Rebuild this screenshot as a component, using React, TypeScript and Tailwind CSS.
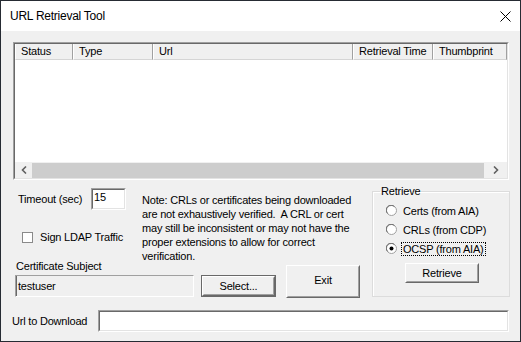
import React, { useState } from "react";

const font = { fontFamily: '"Liberation Sans", Arial, sans-serif' };

function Raised({ className = "", children }: { className?: string; children: React.ReactNode }) {
    return (
        <div className={`border border-t-white border-l-white border-b-[#696969] border-r-[#696969] bg-[#f0f0f0] ${className}`}>
            <div className="flex h-full w-full items-center justify-center border border-t-[#f0f0f0] border-l-[#f0f0f0] border-b-[#a0a0a0] border-r-[#a0a0a0]">
                {children}
            </div>
        </div>
    );
}

function Sunken({ className = "", inner = "bg-white", children }: { className?: string; inner?: string; children?: React.ReactNode }) {
    return (
        <div className={`border border-t-[#a0a0a0] border-l-[#a0a0a0] border-b-white border-r-white ${className}`}>
            <div className={`h-full w-full border border-t-[#696969] border-l-[#696969] border-b-[#e3e3e3] border-r-[#e3e3e3] ${inner}`}>
                {children}
            </div>
        </div>
    );
}

function Radio({ checked }: { checked?: boolean }) {
    return (
        <svg width="11" height="11" viewBox="0 0 11 11" className="shrink-0">
            <circle cx="5.5" cy="5.5" r="5" fill="#fff" stroke="#a0a0a0" />
            <path d="M1.6 8.4 A4.2 4.2 0 0 1 8.4 1.6" fill="none" stroke="#696969" strokeWidth="1" />
            {checked && <circle cx="5.5" cy="5.5" r="2" fill="#000" />}
        </svg>
    );
}

const columns = [
    { label: "Status", w: "w-[58px]" },
    { label: "Type", w: "w-[80px]" },
    { label: "Url", w: "w-[200px]" },
    { label: "Retrieval Time", w: "w-[80px]" },
    { label: "Thumbprint", w: "flex-1" },
];

export default function App() {
    const [mode, setMode] = useState("ocsp");
    const [signLdap, setSignLdap] = useState(false);

    const options = [
        { id: "certs", label: "Certs (from AIA)" },
        { id: "crls", label: "CRLs (from CDP)" },
        { id: "ocsp", label: "OCSP (from AIA)" },
    ];

    return (
        <div className="flex h-[342px] w-[521px] flex-col border border-[#262b33] text-[11px] tracking-[-0.2px] text-black" style={font}>
            {/* title bar */}
            <div className="flex h-[30px] shrink-0 items-center justify-between bg-white pl-[9px] pr-[9px]">
                <span className="text-[12px] tracking-[-0.25px]">URL Retrieval Tool</span>
                <svg width="11" height="11" viewBox="0 0 11 11">
                    <path d="M0.5 0.5 L10.5 10.5 M10.5 0.5 L0.5 10.5" stroke="#000" strokeWidth="1" />
                </svg>
            </div>

            <div className="flex flex-1 flex-col bg-[#f0f0f0]">
                {/* list view */}
                <Sunken className="ml-[12px] mt-[11px] h-[138px] w-[496px]" inner="bg-white flex flex-col">
                    <div className="flex h-[16px] shrink-0 bg-[#f0f0f0]">
                        {columns.map((c) => (
                            <div
                                key={c.label}
                                className={`${c.w} flex items-center border-l border-r border-b border-l-white border-r-[#a0a0a0] border-b-[#d5d5d5] pl-[5px] whitespace-nowrap`}
                            >
                                {c.label}
                            </div>
                        ))}
                    </div>
                    <div className="flex-1" />
                    <div className="flex h-[16px] shrink-0 items-center bg-[#f0f0f0]">
                        <div className="flex w-[17px] items-center justify-center">
                            <svg width="6" height="8" viewBox="0 0 6 8">
                                <path d="M5 0.5 L1.5 4 L5 7.5" fill="none" stroke="#606060" strokeWidth="1.6" />
                            </svg>
                        </div>
                        <div className="h-[15px] flex-1 bg-[#cdcdcd]" />
                        <div className="flex w-[23px] items-center justify-center">
                            <svg width="6" height="8" viewBox="0 0 6 8">
                                <path d="M1 0.5 L4.5 4 L1 7.5" fill="none" stroke="#606060" strokeWidth="1.6" />
                            </svg>
                        </div>
                    </div>
                </Sunken>

                <div className="flex">
                    {/* left part */}
                    <div className="w-[371px]">
                        <div className="mt-[8px] flex h-[71px]">
                            <div className="w-[141px] pl-[17px]">
                                <div className="flex h-[22px] items-center">
                                    <span className="w-[73px] whitespace-nowrap">Timeout (sec)</span>
                                    <Sunken className="h-[22px] w-[35px]">
                                        <div className="pl-[1px] leading-[14px]">15</div>
                                    </Sunken>
                                </div>
                                <label className="ml-[4px] mt-[21px] flex cursor-default items-center gap-[7px]" onClick={() => setSignLdap(!signLdap)}>
                                    <span className="flex h-[11px] w-[11px] items-center justify-center border border-[#8a8a8a] bg-white text-[9px] leading-none">
                                        {signLdap ? "✓" : ""}
                                    </span>
                                    <span className="whitespace-nowrap leading-[12px]">Sign LDAP Traffic</span>
                                </label>
                            </div>
                            <p className="mt-[5px] whitespace-nowrap leading-[14px]">
                                Note: CRLs or certificates being downloaded
                                <br />
                                are not exhaustively verified.&nbsp; A CRL or cert
                                <br />
                                may still be inconsistent or may not have the
                                <br />
                                proper extensions to allow for correct
                                <br />
                                verification.
                            </p>
                        </div>

                        <div className="flex items-start">
                            <div className="ml-[14px]">
                                <div className="h-[14px] pl-[1px] leading-[14px] whitespace-nowrap">Certificate Subject</div>
                                <div className="mt-[2px] flex items-center">
                                    <div className="flex h-[22px] w-[179px] items-center border border-t-[#a0a0a0] border-l-[#a0a0a0] border-b-white border-r-white">
                                        <div className="h-full w-full border-l border-l-[#696969] pl-[1px] leading-[20px]">testuser</div>
                                    </div>
                                    <div className="ml-[7px] h-[22px] w-[75px] border border-[#696969]">
                                        <Raised className="h-full w-full border-b-[#404040] border-r-[#404040]">Select...</Raised>
                                    </div>
                                </div>
                            </div>
                            <Raised className="ml-[10px] mt-[6px] h-[33px] w-[74px]">
                                <span className="-mt-[2px]">Exit</span>
                            </Raised>
                        </div>
                    </div>

                    {/* retrieve group */}
                    <fieldset className="mt-[4px] h-[113px] w-[138px] border border-[#dcdcdc] shadow-[inset_1px_1px_0_#fff]">
                        <legend className="ml-[7px] px-[1px] leading-[14px]">Retrieve</legend>
                        <div className="pt-[3px]">
                            {options.map((o) => (
                                <div
                                    key={o.id}
                                    className="ml-[13px] flex h-[19px] cursor-default items-center gap-[5px]"
                                    onClick={() => setMode(o.id)}
                                >
                                    <Radio checked={mode === o.id} />
                                    <span
                                        className={`whitespace-nowrap px-[1px] leading-[12px] ${
                                            o.id === "ocsp" ? "outline outline-1 outline-dotted outline-black" : ""
                                        }`}
                                    >
                                        {o.label}
                                    </span>
                                </div>
                            ))}
                            <Raised className="ml-[32px] mt-[5px] h-[20px] w-[74px]">Retrieve</Raised>
                        </div>
                    </fieldset>
                </div>

                {/* url to download */}
                <div className="mt-[12px] flex items-center pl-[11px]">
                    <span className="w-[86px] whitespace-nowrap">Url to Download</span>
                    <Sunken className="h-[22px] w-[411px]" />
                </div>
            </div>
        </div>
    );
}
